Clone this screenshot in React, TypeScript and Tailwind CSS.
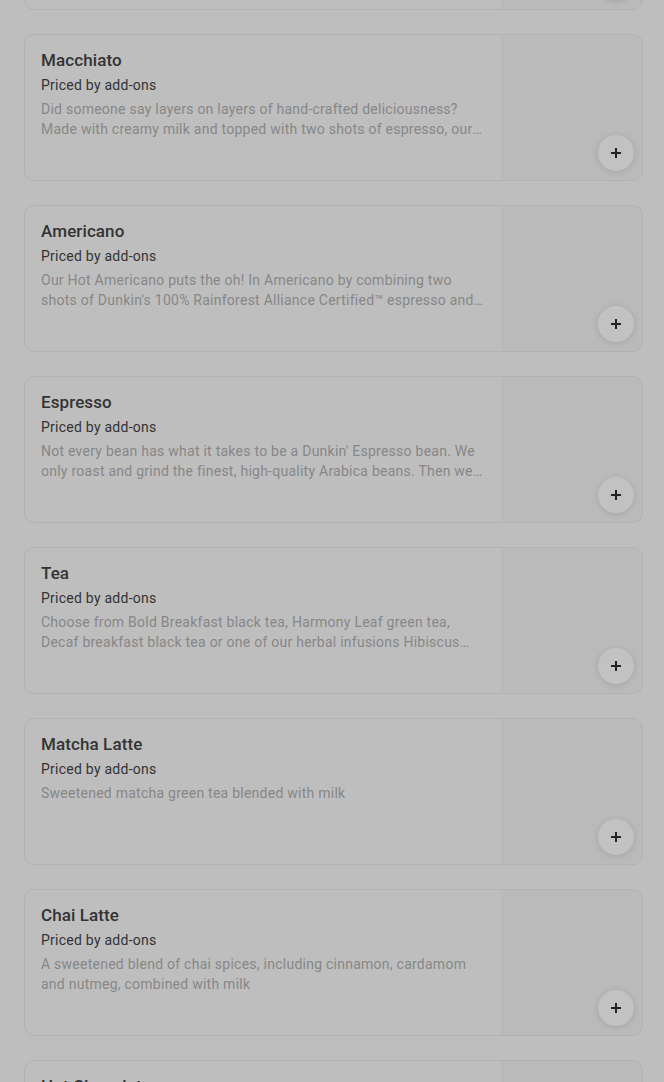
import React from "react";

const items = [
  {
    title: "Cappuccino",
    desc: "Our Hot Cappuccino blends rich espresso with hot milk and a layer of velvety foam for a delicious, smooth taste.",
  },
  {
    title: "Macchiato",
    desc: "Did someone say layers on layers of hand-crafted deliciousness? Made with creamy milk and topped with two shots of espresso, our Macchiato is a bold treat.",
  },
  {
    title: "Americano",
    desc: "Our Hot Americano puts the oh! In Americano by combining two shots of Dunkin's 100% Rainforest Alliance Certified™ espresso and hot water.",
  },
  {
    title: "Espresso",
    desc: "Not every bean has what it takes to be a Dunkin' Espresso bean. We only roast and grind the finest, high-quality Arabica beans. Then we brew them.",
  },
  {
    title: "Tea",
    desc: "Choose from Bold Breakfast black tea, Harmony Leaf green tea, Decaf breakfast black tea or one of our herbal infusions Hibiscus and more.",
  },
  {
    title: "Matcha Latte",
    desc: "Sweetened matcha green tea blended with milk",
  },
  {
    title: "Chai Latte",
    desc: "A sweetened blend of chai spices, including cinnamon, cardamom and nutmeg, combined with milk",
  },
  {
    title: "Hot Chocolate",
    desc: "Rich, creamy hot chocolate made with milk.",
  },
];

function Card({ title, desc }: { title: string; desc: string }) {
  return (
    <div className="relative flex h-[147px] w-[619px] shrink-0 overflow-hidden rounded-[10px] border border-[#b2b2b2] bg-[#bebebe]">
      <div className="flex-1 pl-4 pt-[13px] pr-[16px]">
        <div className="mb-[3px] text-[17px] leading-[24px] font-medium tracking-[0.1px] text-[#333333]">{title}</div>
        <div className="text-[14px] leading-[20px] tracking-[0.25px] text-[#333333]">Priced by add-ons</div>
        <div className="mt-[4px] w-[444px] line-clamp-2 text-[14px] leading-[20px] tracking-[0.25px] text-[#878787]">{desc}</div>
      </div>
      <div className="w-[143px] shrink-0 bg-[#bababa]" />
      <button className="absolute right-[8px] bottom-[9px] flex h-[36px] w-[36px] items-center justify-center rounded-full bg-[#c2c2c2] shadow-[0_1px_6px_rgba(0,0,0,0.12)]">
        <svg width="12" height="12" viewBox="0 0 12 12">
          <path d="M6 1v10M1 6h10" stroke="#222" strokeWidth="2" strokeLinecap="butt" />
        </svg>
      </button>
    </div>
  );
}

export default function App() {
  return (
    <div
      className="h-[1082px] w-[664px] overflow-hidden bg-[#bebebe]"
      style={{ fontFamily: "Roboto, 'Noto Sans', sans-serif" }}
    >
      <div className="mt-[-137px] flex flex-col gap-6 pl-6">
        {items.map((it) => (
          <Card key={it.title} title={it.title} desc={it.desc} />
        ))}
      </div>
    </div>
  );
}
